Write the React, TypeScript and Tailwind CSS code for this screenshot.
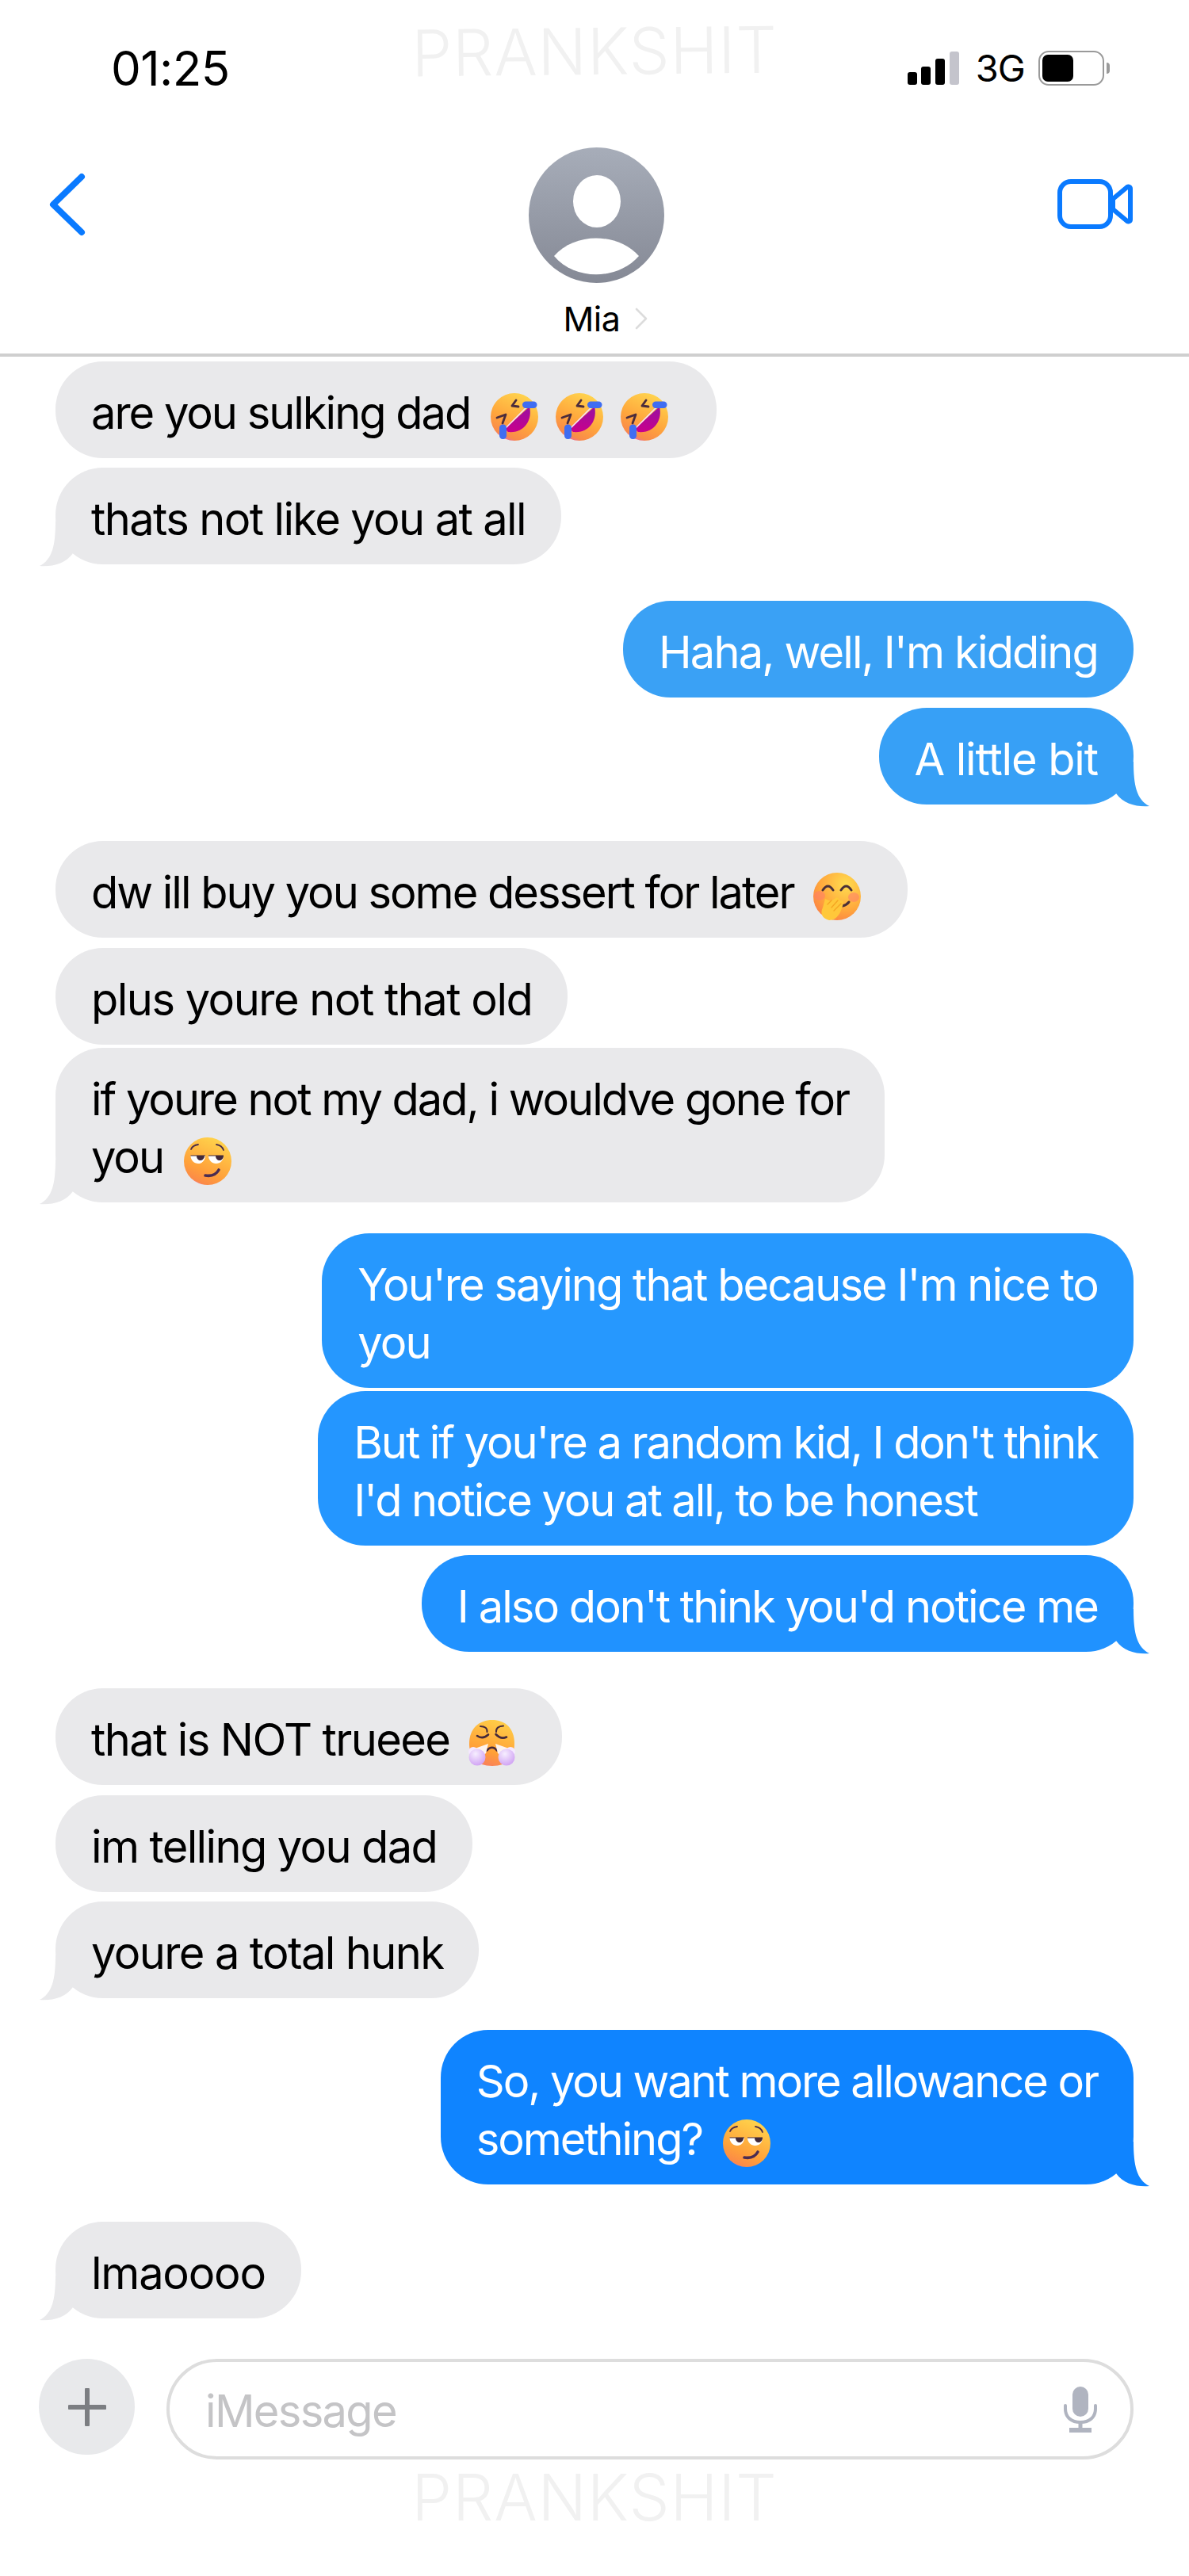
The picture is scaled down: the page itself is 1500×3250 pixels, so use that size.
import React from "react";

function Rofl({ className = "" }: { className?: string }) {
  return (
    <svg viewBox="0 0 60 60" className={`inline-block w-[60px] h-[60px] align-[-15px] ${className}`}>
      <defs>
        <linearGradient id="rf" x1="0.8" y1="0" x2="0.35" y2="1">
          <stop offset="0" stopColor="#ffd84f" />
          <stop offset="0.6" stopColor="#ffa63c" />
          <stop offset="0.92" stopColor="#f98a4a" />
          <stop offset="1" stopColor="#ea70a0" />
        </linearGradient>
        <linearGradient id="rm" x1="0.6" y1="0" x2="0.4" y2="1">
          <stop offset="0" stopColor="#9c10a0" />
          <stop offset="1" stopColor="#c8008c" />
        </linearGradient>
      </defs>
      <circle cx="30" cy="30" r="30" fill="url(#rf)" />
      <path d="M18 45 L49 17 C53 33 43 51 22 49 Z" fill="url(#rm)" />
      <path d="M18 45 L45 18" stroke="#f3e4ff" strokeWidth="1.6" />
      <path d="M32 9 L27 16 L35 17" fill="none" stroke="#4b2c3c" strokeWidth="2.8" strokeLinejoin="round" strokeLinecap="round" />
      <path d="M8 31 L19 27 L15 38" fill="none" stroke="#4b2c3c" strokeWidth="2.8" strokeLinejoin="round" strokeLinecap="round" />
      <rect x="40" y="10.5" width="18.5" height="8.5" rx="4.2" fill="#3f6df2" />
      <rect x="11" y="39.5" width="9" height="18.5" rx="4.2" fill="#3f6df2" />
    </svg>
  );
}

function HandFace({ className = "" }: { className?: string }) {
  return (
    <svg viewBox="0 0 60 60" className={`inline-block w-[60px] h-[60px] align-[-15px] ${className}`}>
      <defs>
        <radialGradient id="hf" cx="0.68" cy="0.25" r="0.85">
          <stop offset="0" stopColor="#ffdc4f" />
          <stop offset="0.65" stopColor="#ffa63c" />
          <stop offset="1" stopColor="#fb7f45" />
        </radialGradient>
      </defs>
      <circle cx="30" cy="30" r="30" fill="url(#hf)" />
      <ellipse cx="8" cy="29" rx="7" ry="6" fill="#ff7b6b" opacity="0.55" />
      <ellipse cx="51" cy="31" rx="7" ry="6" fill="#ff7b6b" opacity="0.55" />
      <path d="M12 22 Q18.5 12 25 22" fill="none" stroke="#4a3038" strokeWidth="3" strokeLinecap="round" />
      <path d="M35 22 Q41.5 12 48 22" fill="none" stroke="#4a3038" strokeWidth="3" strokeLinecap="round" />
      <path d="M37 42 Q42 41 45 37" fill="none" stroke="#4a3038" strokeWidth="3" strokeLinecap="round" />
      <path d="M20 60 C12 58 8 52 12 44 L15 33 L22 36 L30 31 L34 35 L38 36 L37 42 L34 50 C30 57 26 60 20 60 Z" fill="#ffc83a" />
      <path d="M18 40 L23 35 M23 44 L31 35 M26 48 L35 39" stroke="#f5a623" strokeWidth="1.4" strokeLinecap="round" />
    </svg>
  );
}

function Smirk({ className = "" }: { className?: string }) {
  return (
    <svg viewBox="0 0 60 60" className={`inline-block w-[60px] h-[60px] align-[-15px] ${className}`}>
      <defs>
        <linearGradient id="sf" x1="0.75" y1="0" x2="0.3" y2="1">
          <stop offset="0" stopColor="#ffd64c" />
          <stop offset="0.7" stopColor="#ffa03a" />
          <stop offset="0.94" stopColor="#fb8a48" />
          <stop offset="1" stopColor="#ee70a8" />
        </linearGradient>
      </defs>
      <circle cx="30" cy="30" r="30" fill="url(#sf)" />
      <path d="M9 15 Q11 10 18 9" fill="none" stroke="#4a2c4a" strokeWidth="1.8" strokeLinecap="round" />
      <path d="M41 9 Q48 10 50 16" fill="none" stroke="#4a2c4a" strokeWidth="1.8" strokeLinecap="round" />
      <path d="M8.5 23 H27 C27 29 23 33 18 33 C13 33 8.5 29 8.5 23 Z" fill="#fff" />
      <path d="M31 23 H50 C50 29 46 33 40.5 33 C35.5 33 31 29 31 23 Z" fill="#fff" />
      <path d="M16 23 H26 C26 27 23 29 21 29 C18.5 29 16 27 16 23 Z" fill="#41293a" />
      <path d="M40 23 H50 C50 27 47 29 45 29 C42.5 29 40 27 40 23 Z" fill="#41293a" />
      <path d="M8.5 23 H27 M31 23 H50" stroke="#41293a" strokeWidth="1" />
      <path d="M27 48 Q39 50 44 41" fill="none" stroke="#4a2c52" strokeWidth="3.6" strokeLinecap="round" />
    </svg>
  );
}

function Steam({ className = "" }: { className?: string }) {
  return (
    <svg viewBox="0 0 60 60" className={`inline-block w-[60px] h-[60px] align-[-15px] ${className}`}>
      <defs>
        <linearGradient id="st" x1="0.7" y1="0" x2="0.4" y2="1">
          <stop offset="0" stopColor="#ffcf48" />
          <stop offset="0.7" stopColor="#ffa038" />
          <stop offset="1" stopColor="#f9805a" />
        </linearGradient>
        <radialGradient id="sc" cx="0.4" cy="0.3" r="0.8">
          <stop offset="0" stopColor="#f6eeff" />
          <stop offset="1" stopColor="#cc9af2" />
        </radialGradient>
      </defs>
      <path d="M1 30 C1 10 14 0 30 0 C46 0 58 10 58 30 C58 46 50 58 30 58 C10 58 1 46 1 30 Z" fill="url(#st)" />
      <path d="M15 8 Q24 8 23.5 15" fill="none" stroke="#45293a" strokeWidth="2" strokeLinecap="round" />
      <path d="M44 7.5 Q34.5 8 35 15" fill="none" stroke="#45293a" strokeWidth="2" strokeLinecap="round" />
      <path d="M11 20 Q18 25 25 18.5" fill="none" stroke="#45293a" strokeWidth="2.6" strokeLinecap="round" />
      <path d="M34.5 18 Q41 25 48 21.5" fill="none" stroke="#45293a" strokeWidth="2.6" strokeLinecap="round" />
      <path d="M23 38.5 Q30 31 36 38.5" fill="none" stroke="#45293a" strokeWidth="2.6" strokeLinecap="round" />
      <path d="M25 30 L8 36 L12 50 L22 42 Z" fill="#fdf3ee" />
      <path d="M34 30 L51 36 L47 50 L37 42 Z" fill="#fdf3ee" />
      <circle cx="6" cy="40" r="6" fill="#f5e8ff" />
      <circle cx="53" cy="40" r="6" fill="#f5e8ff" />
      <circle cx="11" cy="47" r="10.5" fill="url(#sc)" />
      <circle cx="48" cy="47" r="10.5" fill="url(#sc)" />
    </svg>
  );
}

function Bubble({
  right,
  tail,
  bg,
  fill,
  className,
  children,
}: {
  right?: boolean;
  tail?: boolean;
  bg: string;
  fill: string;
  className: string;
  children: React.ReactNode;
}) {
  return (
    <div
      className={`relative rounded-[60px] px-[45px] py-[24.5px] whitespace-nowrap text-[56px] leading-[73px] ${
        right ? "self-end text-white" : "self-start text-black"
      } ${bg} ${className}`}
    >
      {tail &&
        (right ? (
          <svg viewBox="0 0 50 60" className={`absolute right-[-22px] bottom-[-4px] w-[50px] h-[60px] ${fill}`}>
            <path d="M28 2 C28 32 32 50 48 58 C32 59 16 56 6 42 L6 2 Z" />
          </svg>
        ) : (
          <svg viewBox="0 0 50 60" className={`absolute left-[-22px] bottom-[-4px] w-[50px] h-[60px] ${fill}`}>
            <path d="M22 2 C22 32 18 50 2 58 C18 59 34 56 44 42 L44 2 Z" />
          </svg>
        ))}
      <span className="relative top-[4px]">{children}</span>
    </div>
  );
}

const GRAY = "bg-[#e9e9eb]";
const GRAYF = "fill-[#e9e9eb]";

export default function App() {
  return (
    <div className="relative w-[1500px] h-[3250px] overflow-hidden bg-white font-['Inter','Liberation_Sans',sans-serif]">
      <div className="absolute left-0 right-0 top-[20px] flex justify-center text-[81px] leading-[90px] font-light tracking-[0.01em] text-[#f1f1f1] rotate-[-0.6deg]">
        PRANKSHIT
      </div>

      {/* status bar */}
      <div className="relative flex h-[172px] items-center justify-between pl-[140px] pr-[100px]">
        <span className="text-[60px] leading-[70px] tracking-[-0.01em] text-black">01:25</span>
        <div className="flex items-center">
          <svg viewBox="0 0 66 43" className="mr-[20px] w-[66px] h-[43px]">
            <rect x="0" y="26" width="12" height="16" rx="3" fill="#000" />
            <rect x="17" y="19" width="12" height="23" rx="3" fill="#000" />
            <rect x="35" y="9" width="12" height="33" rx="3" fill="#000" />
            <rect x="53" y="0" width="12" height="42" rx="3" fill="#c4c4cc" />
          </svg>
          <span className="mr-[17px] text-[47px] leading-[56px] tracking-[-0.02em] text-black">3G</span>
          <div className="flex items-center gap-[3px]">
            <div className="flex h-[44px] w-[83px] items-center rounded-[13px] border-[2.5px] border-[#9a9a9a] pl-[3px]">
              <div className="h-[34px] w-[39px] rounded-[7px] bg-black" />
            </div>
            <div className="h-[14px] w-[4px] rounded-r-full bg-[#9a9a9a]" />
          </div>
        </div>
      </div>

      {/* nav */}
      <div className="grid h-[274px] grid-cols-[1fr_171px_1fr] pl-[5px] pr-0">
        <div className="pl-[55px] pt-[46px]">
          <svg viewBox="0 0 50 80" className="w-[50px] h-[80px]" fill="none">
            <path d="M43 5 L7 40 L43 75" stroke="#0a7aff" strokeWidth="8" strokeLinecap="round" strokeLinejoin="round" />
          </svg>
        </div>
        <div className="flex flex-col items-center pt-[14px]">
          <svg viewBox="0 0 171 171" className="w-[171px] h-[171px] shrink-0">
            <defs>
              <linearGradient id="av" x1="0" y1="0" x2="0" y2="1">
                <stop offset="0" stopColor="#a7adb9" />
                <stop offset="1" stopColor="#858995" />
              </linearGradient>
            </defs>
            <circle cx="85.5" cy="85.5" r="85.5" fill="url(#av)" />
            <ellipse cx="86" cy="68" rx="30" ry="33" fill="#fff" />
            <path d="M32 137 C58 107 112 107 139 137 C112 168 58 168 32 137 Z" fill="#fff" />
          </svg>
          <div className="ml-[22px] mt-[20px] flex items-center gap-[18px] whitespace-nowrap">
            <span className="text-[43px] leading-[50px] tracking-[-0.01em] text-black">Mia</span>
            <svg viewBox="0 0 16 28" className="w-[16px] h-[28px] shrink-0" fill="none">
              <path d="M2 2 L14 14 L2 26" stroke="#dcdcdc" strokeWidth="2.6" strokeLinecap="round" strokeLinejoin="round" />
            </svg>
          </div>
        </div>
        <div className="flex justify-end pr-[70px] pt-[54px]">
          <svg viewBox="0 0 96 64" className="w-[96px] h-[64px]" fill="none">
            <rect x="3" y="3" width="64" height="57" rx="14" stroke="#0a7aff" strokeWidth="6" />
            <path d="M70 25 L88 10 C90 9 92 10 92 12 L92 51 C92 53 90 54 88 53 L70 38 Z" stroke="#0a7aff" strokeWidth="6" strokeLinejoin="round" />
          </svg>
        </div>
      </div>
      <div className="h-[4px] bg-[#cfcfcf]" />

      {/* conversation */}
      <div className="flex flex-col pl-[70px] pr-[70px] pt-[6px]">
        <Bubble bg={GRAY} fill={GRAYF} className="tracking-[-0.036em]">
          are you sulking dad
          <Rofl className="ml-[26px]" />
          <Rofl className="ml-[22px]" />
          <Rofl className="ml-[22px] mr-[16px]" />
        </Bubble>
        <Bubble tail bg={GRAY} fill={GRAYF} className="mt-[12px] tracking-[-0.029em]">thats not like you at all</Bubble>

        <Bubble right bg="bg-[#3aa1f5]" fill="fill-[#3aa1f5]" className="mt-[46px] tracking-[-0.033em]">Haha, well, I'm kidding</Bubble>
        <Bubble right tail bg="bg-[#37a0f6]" fill="fill-[#37a0f6]" className="mt-[13px] tracking-[-0.02em]">A little bit</Bubble>

        <Bubble bg={GRAY} fill={GRAYF} className="mt-[46px] tracking-[-0.036em]">
          dw ill buy you some dessert for later
          <HandFace className="ml-[24px] mr-[14px]" />
        </Bubble>
        <Bubble bg={GRAY} fill={GRAYF} className="mt-[13px] tracking-[-0.027em]">plus youre not that old</Bubble>
        <Bubble tail bg={GRAY} fill={GRAYF} className="mt-[4px] tracking-[-0.036em]">
          if youre not my dad, i wouldve gone for<br />you
          <Smirk className="ml-[26px]" />
        </Bubble>

        <Bubble right bg="bg-[#2698fe]" fill="fill-[#2698fe]" className="mt-[39px] tracking-[-0.035em]">
          You're saying that because I'm nice to<br />you
        </Bubble>
        <Bubble right bg="bg-[#2496ff]" fill="fill-[#2496ff]" className="mt-[4px] tracking-[-0.037em]">
          But if you're a random kid, I don't think<br />I'd notice you at all, to be honest
        </Bubble>
        <Bubble right tail bg="bg-[#2092ff]" fill="fill-[#2092ff]" className="mt-[12px] tracking-[-0.035em]">I also don't think you'd notice me</Bubble>

        <Bubble bg={GRAY} fill={GRAYF} className="mt-[46px] tracking-[-0.029em]">
          that is NOT trueee
          <Steam className="ml-[24px] mr-[13px]" />
        </Bubble>
        <Bubble bg={GRAY} fill={GRAYF} className="mt-[13px] tracking-[-0.029em]">im telling you dad</Bubble>
        <Bubble tail bg={GRAY} fill={GRAYF} className="mt-[12px] tracking-[-0.029em]">youre a total hunk</Bubble>

        <Bubble right tail bg="bg-[#0f84ff]" fill="fill-[#0f84ff]" className="mt-[40px] tracking-[-0.037em]">
          So, you want more allowance or<br />something?
          <Smirk className="ml-[26px]" />
        </Bubble>

        <Bubble tail bg={GRAY} fill={GRAYF} className="mt-[47px] tracking-[-0.022em]">lmaoooo</Bubble>
      </div>

      {/* input */}
      <div className="mt-[51px] flex items-start pl-[49px] pr-[70px]">
        <div className="flex h-[121px] w-[121px] shrink-0 items-center justify-center rounded-full bg-[#e8e9eb]">
          <svg viewBox="0 0 48 48" className="w-[48px] h-[48px]" fill="none">
            <path d="M24 2 V46 M2 24 H46" stroke="#7c7e82" strokeWidth="6" strokeLinecap="round" />
          </svg>
        </div>
        <div className="ml-[40px] flex h-[127px] flex-1 items-center justify-between rounded-full border-[4px] border-[#dddddd] pl-[45px] pr-[41px]">
          <span className="relative top-[2px] text-[56px] leading-[70px] tracking-[-0.03em] text-[#c4c4c6]">iMessage</span>
          <svg viewBox="0 0 44 58" className="w-[44px] h-[58px]" fill="none">
            <rect x="12" y="0" width="20" height="38" rx="10" fill="#b0b4c0" />
            <path d="M3 24 V28 C3 39 11 45 22 45 C33 45 41 39 41 28 V24" stroke="#b0b4c0" strokeWidth="4" strokeLinecap="round" />
            <path d="M22 45 V54" stroke="#b0b4c0" strokeWidth="5" />
            <path d="M8 55 H36" stroke="#b0b4c0" strokeWidth="6" />
          </svg>
        </div>
      </div>

      <div className="absolute left-0 right-0 top-[3106px] flex justify-center text-[81px] leading-[90px] font-light tracking-[0.01em] text-[#f1f1f1]">
        PRANKSHIT
      </div>
    </div>
  );
}
